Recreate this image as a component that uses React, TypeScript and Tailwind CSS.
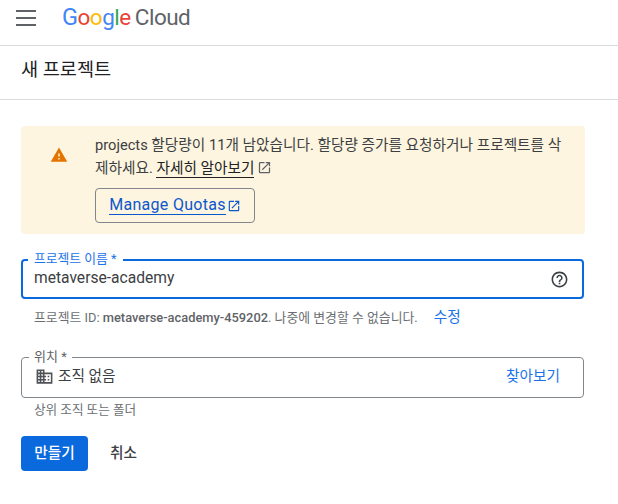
const fontStack = "font-['Roboto','Noto_Sans_CJK_KR',sans-serif]";

function ExternalIcon({ className }: { className?: string }) {
  return (
    <svg className={className} viewBox="0 0 24 24" fill="currentColor" aria-hidden="true">
      <path d="M19 19H5V5h7V3H5a2 2 0 0 0-2 2v14a2 2 0 0 0 2 2h14a2 2 0 0 0 2-2v-7h-2v7zM14 3v2h3.59l-9.83 9.83 1.41 1.41L19 6.41V10h2V3h-7z" />
    </svg>
  );
}

function MenuIcon() {
  return (
    <svg className="h-[20px] w-[20px]" viewBox="0 0 20 20" fill="#5f6368" aria-hidden="true">
      <rect x="0" y="2" width="20" height="2" />
      <rect x="0" y="9" width="20" height="2" />
      <rect x="0" y="16" width="20" height="2" />
    </svg>
  );
}

function WarningIcon() {
  return (
    <svg className="h-[18px] w-[18px]" viewBox="0 0 24 24" fill="#e37400" aria-hidden="true">
      <path d="M1 21h22L12 2 1 21zm12-3h-2v-2h2v2zm0-4h-2v-4h2v4z" />
    </svg>
  );
}

function HelpIcon() {
  return (
    <svg className="h-[19px] w-[19px]" viewBox="0 0 24 24" fill="#3c4043" aria-hidden="true">
      <path d="M11 18h2v-2h-2v2zm1-16C6.48 2 2 6.48 2 12s4.48 10 10 10 10-4.48 10-10S17.52 2 12 2zm0 18c-4.41 0-8-3.59-8-8s3.59-8 8-8 8 3.59 8 8-3.59 8-8 8zm0-14c-2.21 0-4 1.79-4 4h2c0-1.1.9-2 2-2s2 .9 2 2c0 2-3 1.75-3 5h2c0-2.25 3-2.5 3-5 0-2.21-1.79-4-4-4z" />
    </svg>
  );
}

function BuildingIcon() {
  return (
    <svg className="h-[19px] w-[19px]" viewBox="0 0 24 24" fill="#4f5256" aria-hidden="true">
      <path d="M12 7V3H2v18h20V7H12zM6 19H4v-2h2v2zm0-4H4v-2h2v2zm0-4H4V9h2v2zm0-4H4V5h2v2zm4 12H8v-2h2v2zm0-4H8v-2h2v2zm0-4H8V9h2v2zm0-4H8V5h2v2zm10 12h-8v-2h2v-2h-2v-2h2v-2h-2V9h8v10zm-2-8h-2v2h2v-2zm0 4h-2v2h2v-2z" />
    </svg>
  );
}

export default function App() {
  return (
    <div className={`${fontStack} h-[504px] w-[618px] overflow-hidden bg-white text-[#202124]`}>
      <header className="flex h-[46px] items-center border-b border-[#dadce0] pb-[9px] pl-[16px]">
        <MenuIcon />
        <div className="ml-[26px] flex items-baseline text-[22.5px] leading-none tracking-[-0.5px]">
          <span className="text-[23.5px] text-[#4285f4]">G</span>
          <span className="text-[#ea4335]">o</span>
          <span className="text-[#fbbc04]">o</span>
          <span className="text-[#4285f4]">g</span>
          <span className="text-[#34a853]">l</span>
          <span className="text-[#ea4335]">e</span>
          <span className="ml-[4px] text-[#5f6368]">Cloud</span>
        </div>
      </header>

      <div className="flex h-[54px] items-center border-b border-[#dadce0] pb-[3px] pl-[21px] text-[18.6px] text-[#202124]">
        새 프로젝트
      </div>

      <div className="pl-[21px] pr-[33px] pt-[26px]">
        <div className="flex h-[108px] rounded-[4px] bg-[#fdf5df] pt-[8px]">
          <div className="flex w-[74px] shrink-0 justify-center pl-[2px] pt-[12px]">
            <WarningIcon />
          </div>
          <div className="min-w-0 flex-1 pr-[16px] text-[14.66px] leading-[23px] text-[#3c4043]">
            <p className="whitespace-nowrap">
              projects 할당량이 11개 남았습니다. 할당량 증가를 요청하거나 프로젝트를 삭
              <br />
              제하세요.{" "}
              <span className="border-b border-[#202124] text-[#202124]">자세히 알아보기</span>
              <ExternalIcon className="ml-[3px] inline h-[15px] w-[15px] align-[-2px] text-[#5f6368]" />
            </p>
            <button
              className="mt-[8px] flex h-[35px] w-[160px] items-center justify-center rounded-[4px] border border-[#80868b] text-[16px] tracking-[0.3px] text-[#0b57d0]"
              type="button"
            >
              <span className="border-b border-[#0b57d0] leading-[18px]">Manage Quotas</span>
              <ExternalIcon className="ml-[1px] h-[14px] w-[14px]" />
            </button>
          </div>
        </div>

        <div className="relative mt-[25px] flex h-[40px] w-[563px] items-center justify-between rounded-[4px] border-2 border-[#0b69de] pl-[11px] pr-[13px]">
          <span className="absolute -top-[10px] left-[5px] bg-white px-[6px] text-[12.8px] leading-[16px] text-[#1a73e8]">
            프로젝트 이름 *
          </span>
          <span className="text-[15.6px] text-[#3c4043]">metaverse-academy</span>
          <HelpIcon />
        </div>

        <div className="mt-[9px] flex h-[20px] items-center whitespace-nowrap pl-[13px] text-[12.86px] text-[#6b6f73]">
          <span>
            프로젝트 ID: <span className="font-medium text-[#5f6368]">metaverse-academy-459202</span>. 나중에 변경할 수 없습니다.
          </span>
          <span className="ml-[16px] text-[14.66px] text-[#1a73e8]">수정</span>
        </div>

        <div className="relative mt-[29px] flex h-[41px] w-[563px] items-center justify-between rounded-[4px] border border-[#80868b] pb-[2px] pl-[13px] pr-[23px]">
          <span className="absolute -top-[9px] left-[7px] bg-white px-[5px] text-[13px] leading-[16px] text-[#5f6368]">
            위치 *
          </span>
          <div className="flex items-center gap-[4px] text-[14.66px] text-[#3c4043]">
            <BuildingIcon />
            <span>조직 없음</span>
          </div>
          <span className="text-[14.66px] text-[#1a73e8]">찾아보기</span>
        </div>

        <div className="mt-[4px] pl-[13px] text-[12.6px] leading-[16px] text-[#6b6f73]">상위 조직 또는 폴더</div>

        <div className="mt-[18px] flex items-center">
          <button
            className="h-[35px] w-[67px] rounded-[4px] bg-[#0b69de] text-[14.66px] font-medium text-white"
            type="button"
          >
            만들기
          </button>
          <button className="ml-[22px] text-[14.66px] font-medium text-[#3c4043]" type="button">
            취소
          </button>
        </div>
      </div>
    </div>
  );
}
